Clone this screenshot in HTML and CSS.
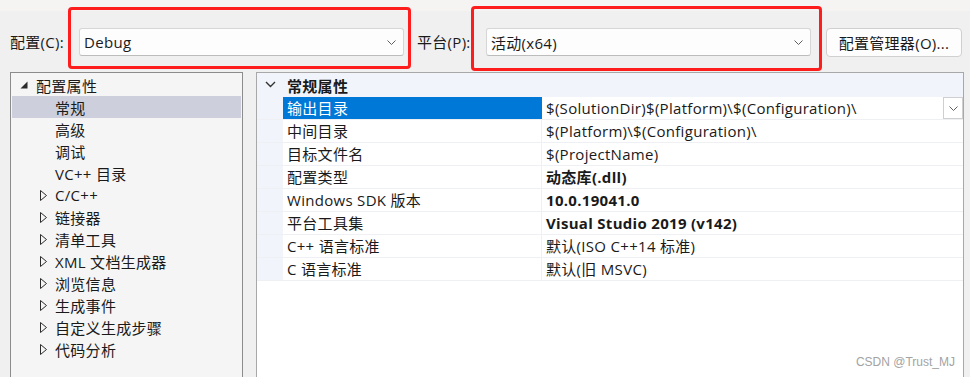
FILE: index.html
```html
<!DOCTYPE html>
<html>
  <head>
    <meta charset="utf-8">
    <title>属性页</title>
    <link rel="stylesheet" href="styles.css">
  </head>
  <body>
    <div class="strip"></div>

    <div class="toolbar">
      <span class="lbl">配置(C):</span>
      <div class="combo">
        <span>Debug</span>
        <svg class="chev" width="9" height="5" viewBox="0 0 9 5"><polyline points="0.5,0.5 4.5,4.5 8.5,0.5"/></svg>
      </div>
      <span class="lbl lbl-plat">平台(P):</span>
      <div class="combo">
        <span>活动(x64)</span>
        <svg class="chev" width="9" height="5" viewBox="0 0 9 5"><polyline points="0.5,0.5 4.5,4.5 8.5,0.5"/></svg>
      </div>
      <button class="btn">配置管理器(O)...</button>
    </div>

    <div class="panes">
      <!-- left: category tree -->
      <div class="tree">
        <div class="node root">
          <svg class="tri" width="8" height="8" viewBox="0 0 8 8"><polygon points="7.5,0.5 7.5,7.5 0.5,7.5"/></svg>配置属性
        </div>
        <div class="node leaf sel">常规</div>
        <div class="node leaf">高级</div>
        <div class="node leaf">调试</div>
        <div class="node leaf">VC++ 目录</div>
        <div class="node kid"><svg class="tri-o" width="7" height="11" viewBox="0 0 7 11"><polygon points="0.5,0.5 6.5,5.5 0.5,10.5"/></svg>C/C++</div>
        <div class="node kid"><svg class="tri-o" width="7" height="11" viewBox="0 0 7 11"><polygon points="0.5,0.5 6.5,5.5 0.5,10.5"/></svg>链接器</div>
        <div class="node kid"><svg class="tri-o" width="7" height="11" viewBox="0 0 7 11"><polygon points="0.5,0.5 6.5,5.5 0.5,10.5"/></svg>清单工具</div>
        <div class="node kid"><svg class="tri-o" width="7" height="11" viewBox="0 0 7 11"><polygon points="0.5,0.5 6.5,5.5 0.5,10.5"/></svg>XML 文档生成器</div>
        <div class="node kid"><svg class="tri-o" width="7" height="11" viewBox="0 0 7 11"><polygon points="0.5,0.5 6.5,5.5 0.5,10.5"/></svg>浏览信息</div>
        <div class="node kid"><svg class="tri-o" width="7" height="11" viewBox="0 0 7 11"><polygon points="0.5,0.5 6.5,5.5 0.5,10.5"/></svg>生成事件</div>
        <div class="node kid"><svg class="tri-o" width="7" height="11" viewBox="0 0 7 11"><polygon points="0.5,0.5 6.5,5.5 0.5,10.5"/></svg>自定义生成步骤</div>
        <div class="node kid"><svg class="tri-o" width="7" height="11" viewBox="0 0 7 11"><polygon points="0.5,0.5 6.5,5.5 0.5,10.5"/></svg>代码分析</div>
      </div>

      <!-- right: property grid -->
      <div class="grid">
        <div class="head">
          <span class="gut"><svg class="hchev" width="11" height="7" viewBox="0 0 11 7"><polyline points="1,1 5.5,5.5 10,1"/></svg></span>
          <span class="head-title">常规属性</span>
        </div>
        <div class="row">
          <span class="gut"></span><span class="name sel">输出目录</span>
          <span class="val">$(SolutionDir)$(Platform)\$(Configuration)\
            <span class="drop"><svg class="chev" width="9" height="5" viewBox="0 0 9 5"><polyline points="0.5,0.5 4.5,4.5 8.5,0.5"/></svg></span>
          </span>
        </div>
        <div class="row"><span class="gut"></span><span class="name">中间目录</span><span class="val">$(Platform)\$(Configuration)\</span></div>
        <div class="row"><span class="gut"></span><span class="name">目标文件名</span><span class="val">$(ProjectName)</span></div>
        <div class="row"><span class="gut"></span><span class="name">配置类型</span><span class="val bold">动态库(.dll)</span></div>
        <div class="row"><span class="gut"></span><span class="name">Windows SDK 版本</span><span class="val bold">10.0.19041.0</span></div>
        <div class="row"><span class="gut"></span><span class="name">平台工具集</span><span class="val bold">Visual Studio 2019 (v142)</span></div>
        <div class="row"><span class="gut"></span><span class="name">C++ 语言标准</span><span class="val">默认(ISO C++14 标准)</span></div>
        <div class="row"><span class="gut"></span><span class="name">C 语言标准</span><span class="val">默认(旧 MSVC)</span></div>
      </div>
    </div>

    <!-- red annotation boxes drawn over the screenshot -->
    <div class="mark mark-cfg"></div>
    <div class="mark mark-plat"></div>
    <div class="watermark">CSDN @Trust_MJ</div>
  </body>
</html>
```

FILE: styles.css
```css
html, body  {margin:0; padding:0; overflow:hidden; height:100%}
body        {position:relative; background-color:#f0f0f0; color:#1a1a1a; letter-spacing:0.3px;
             font-family:"Open Sans","Noto Sans CJK SC",sans-serif; font-size:15px}

.strip      {height:11px; background-color:#f6f3f3}

/* toolbar with the two combos */
.toolbar    {display:flex; align-items:flex-start; height:28px; padding:17px 0 16px 10px}
.lbl        {width:69px; line-height:28px; white-space:nowrap}
.lbl-plat   {margin-left:13px}
.combo      {width:325px; height:28px; box-sizing:border-box; display:flex; align-items:center; justify-content:space-between;
             padding:0 7px 0 4px; background-color:#fdfdfd; border:1px solid #d6d6d6; border-bottom-color:#bcbcbc; border-radius:3px}
.chev       {fill:none; stroke:#5f5f5f; stroke-width:1}
.btn        {margin-left:15px; width:136px; height:29px; padding:0; font:inherit; letter-spacing:inherit; color:#1a1a1a;
             background-color:#fdfdfd; border:1px solid #d0d0d0; border-radius:4px}

/* two panes, cut off by the bottom of the window */
.panes      {display:flex; gap:13px; margin-left:10px; height:305px}
.tree       {width:233px; box-sizing:border-box; background-color:#f5f5f5; border:1px solid #8c8c8c; border-bottom:none; padding:1px}
.node       {height:22px; display:flex; align-items:center; white-space:nowrap}
.node.root  {padding-left:8px}
.node.kid   {padding-left:28px}
.node.leaf  {padding-left:43px}
.node.sel   {background-color:#cdd0dc}
.tri        {fill:#2b2b2b; margin-right:8px}
.tri-o      {fill:none; stroke:#2b2b2b; stroke-width:1; margin-right:8px}

.grid       {width:708px; box-sizing:border-box; background-color:#fff; border:1px solid #a8a8a8; border-bottom:none}
.head       {height:24px; display:flex; align-items:center; background-color:#f1f5fb}
.gut        {width:26px; height:100%; flex:none; display:flex; align-items:center; justify-content:center; background-color:#f1f5fb}
.hchev      {fill:none; stroke:#333; stroke-width:1.4; margin-top:-2px}
.head-title {padding-left:4px; font-weight:bold}
.row        {height:22px; display:flex; border-bottom:1px solid #eef0f3}
.name       {width:254px; flex:none; padding-left:4px; line-height:22px; border-right:1px solid #eef0f3; white-space:nowrap}
.name.sel   {background-color:#0078d7; color:#fff; border-right-color:#0078d7}
.val        {flex:1; display:flex; align-items:center; justify-content:space-between; padding-left:4px; line-height:22px; white-space:nowrap}
.bold       {font-weight:bold}
.drop       {width:20px; height:22px; box-sizing:border-box; display:flex; align-items:center; justify-content:center;
             background-color:#fff; border:1px solid #cfcfcf}

.mark       {position:absolute; box-sizing:border-box; border:3px solid #fd1d1d; border-radius:4px}
.mark-cfg   {left:68px; top:7px; width:343px; height:62px}
.mark-plat  {left:471px; top:6px; width:351px; height:65px}
.watermark  {position:absolute; right:15px; top:355px; letter-spacing:0; font-family:"Liberation Sans",sans-serif; font-size:12px; color:#a3a3a3}
```
